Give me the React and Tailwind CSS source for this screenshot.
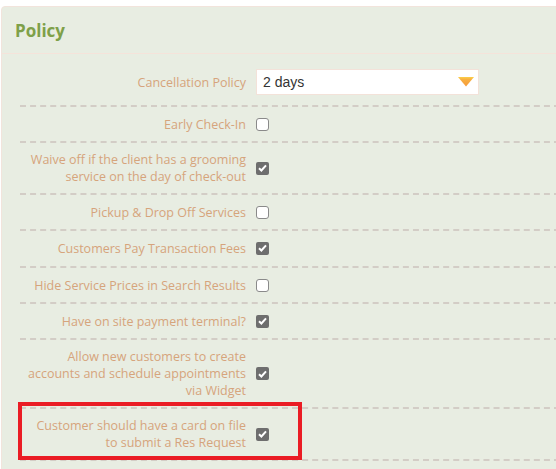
import React from "react";

const Check = ({ checked }) =>
  checked ? (
    <span className="flex h-[13px] w-[13px] shrink-0 items-center justify-center rounded-[2px] bg-[#6e6e6e]">
      <svg width="9" height="8" viewBox="0 0 9 8">
        <path d="M1 4.2 L3.4 6.5 L8 1.3" fill="none" stroke="#fff" strokeWidth="2" strokeLinejoin="miter" />
      </svg>
    </span>
  ) : (
    <span className="block h-[13px] w-[13px] shrink-0 rounded-[3px] border border-[#8a8a8a] bg-white" />
  );

const Row = ({ children, checked, tall }) => (
  <div className={tall ? "flex items-center border-b-2 border-dashed border-[#d3cdc6] pt-2 pb-[9px]" : "flex items-center border-b-2 border-dashed border-[#d3cdc6] py-2"}>
    <div className="w-[226px] shrink-0 whitespace-nowrap text-right text-[12.5px] leading-[17px] text-[#d6a47c]">{children}</div>
    <div className="ml-[10px] flex h-[18px] items-center">
      <Check checked={checked} />
    </div>
  </div>
);

export default function App() {
  return (
    <div className="min-h-[469px] bg-white pt-[6px] pl-[1px]" style={{ fontFamily: '"Open Sans", sans-serif' }}>
      <div className="relative h-[470px] w-[560px] overflow-hidden rounded-tl-[4px] border border-[#f2e4dc] bg-[#e8ede2]">
        <div className="flex h-[47px] items-center border-b border-[#f5e3da] pl-[13px]">
          <span className="mt-[2px] text-[17px] font-bold text-[#7ea049]">Policy</span>
        </div>
        <div className="ml-[18px] pt-[7px]">
          <div className="flex items-center border-b-2 border-dashed border-[#d3cdc6] pt-2 pb-[10px]">
            <div className="w-[226px] shrink-0 text-right text-[12.5px] leading-[17px] text-[#d6a47c]">Cancellation Policy</div>
            <div className="ml-[10px] flex h-[26px] w-[223px] items-center justify-between border border-[#f3e2d9] bg-white pl-[6px] pr-[4px]">
              <span className="text-[14px] text-[#333]" style={{ fontFamily: '"Liberation Sans", Arial, sans-serif' }}>2 days</span>
              <svg width="16" height="10" viewBox="0 0 16 10">
                <defs>
                  <linearGradient id="tri" x1="0" y1="0" x2="0" y2="1">
                    <stop offset="0" stopColor="#fbd04a" />
                    <stop offset="0.25" stopColor="#f8b040" />
                    <stop offset="1" stopColor="#f59a3c" />
                  </linearGradient>
                </defs>
                <path d="M0 0 H16 L8 9.5 Z" fill="url(#tri)" />
              </svg>
            </div>
          </div>
          <Row checked={false}>Early Check-In</Row>
          <Row checked={true}>
            Waive off if the client has a grooming
            <br />
            service on the day of check-out
          </Row>
          <Row checked={false}>Pickup &amp; Drop Off Services</Row>
          <Row checked={true} tall>Customers Pay Transaction Fees</Row>
          <Row checked={false}>Hide Service Prices in Search Results</Row>
          <Row checked={true}>Have on site payment terminal?</Row>
          <Row checked={true}>
            Allow new customers to create
            <br />
            accounts and schedule appointments
            <br />
            via Widget
          </Row>
          <Row checked={true}>
            Customer should have a card on file
            <br />
            to submit a Res Request
          </Row>
        </div>
        <div className="pointer-events-none absolute left-[16px] top-[395px] h-[58px] w-[284px] border-4 border-[#ea1c24]" />
      </div>
    </div>
  );
}
